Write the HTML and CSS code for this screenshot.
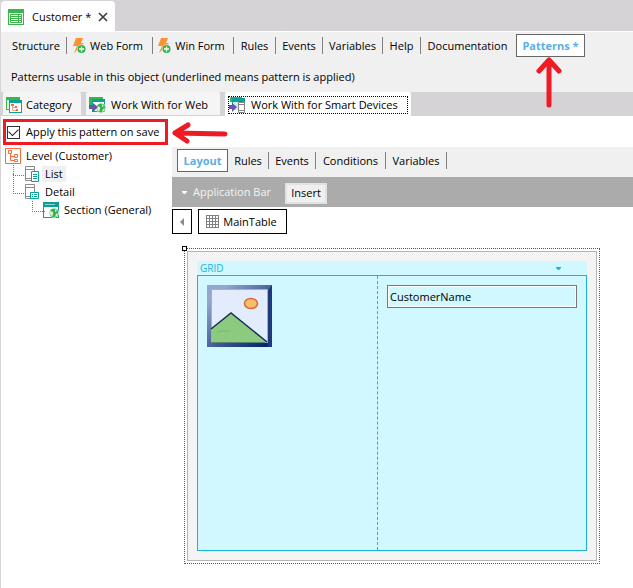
FILE: index.html
```html
<!DOCTYPE html>
<html lang="en">
<head>
<meta charset="utf-8">
<title>Customer</title>
<link rel="stylesheet" href="styles.css">
</head>
<body>
<svg class="defs" width="0" height="0" aria-hidden="true">
  <symbol id="bolt" viewBox="0 0 13 16">
    <path d="M3 0h7L8 5h3L1 15l3-7H0z" fill="#fb9333"/>
    <circle cx="8.500" cy="11" r="4.500" fill="#f0f0f0"/>
    <circle cx="8.500" cy="11" r="4" fill="#2fb84a"/>
    <path d="M8.500 8.500v5M6 11h5" stroke="#fff" stroke-width="1.300"/>
  </symbol>
  <symbol id="globe" viewBox="0 0 10 10">
    <circle cx="5" cy="5" r="5" fill="#fff"/>
    <circle cx="5" cy="5" r="4.500" fill="#35b44a"/>
    <path d="M1 3l3 1 0 2-1 3L1 6zM6 1l2 2-2 1zM7 6l2-1-1 3-2 1z" fill="#d8f3dc"/>
  </symbol>
</svg>

<header class="doc-tabs">
  <div class="doc-tab">
    <svg width="16" height="16" viewBox="0 0 16 16"><path d="M0 0h16v16H0z" fill="#3ab54a"/><path d="M1 4h14v11H1z" fill="#fff"/><path d="M2.500 5.500h11v8h-11z" fill="none" stroke="#3ab54a"/><path d="M3 7.500h7M3 9.500h7M3 11.500h7M11 7.500h2M11 9.500h2M11 11.500h2M10.500 5v9" stroke="#3ab54a"/></svg>
    <span>Customer *</span>
    <button class="close" aria-label="Close"><svg width="10" height="10" viewBox="0 0 10 10"><path d="M1 1l8 8M9 1L1 9" stroke="#404040" stroke-width="1.700"/></svg></button>
  </div>
</header>

<main>
  <section class="top">
    <nav class="menu parts">
      <a href="#">Structure</a>
      <a href="#" class="with-icon"><svg width="13" height="16"><use href="#bolt"/></svg>Web Form</a>
      <a href="#" class="with-icon"><svg width="13" height="16"><use href="#bolt"/></svg>Win Form</a>
      <a href="#">Rules</a>
      <a href="#">Events</a>
      <a href="#">Variables</a>
      <a href="#">Help</a>
      <a href="#" class="last">Documentation</a>
      <a href="#" class="current">Patterns *
        <svg class="arrow-up" width="26" height="54" viewBox="0 0 26 54"><path d="M13 49V4M3 15L13 4l10 11" fill="none" stroke="#ee1b24" stroke-width="5" stroke-linecap="round" stroke-linejoin="round"/></svg>
      </a>
    </nav>
    <p class="hint">Patterns usable in this object (underlined means pattern is applied)</p>
  </section>

  <nav class="pattern-tabs">
    <button class="category"><svg width="16" height="16" viewBox="0 0 16 16"><path d="M0 0h14v13H0z" fill="#3ab54a"/><path d="M1 3h3v9H1z" fill="#dff3e2"/><path d="M3 3h13v13H3z" fill="#0aa396"/><path d="M4 6h11v9H4z" fill="#fff"/><path d="M6.500 8v5.500H11M6.500 10.500H10" fill="none" stroke="#f7a184"/><path d="M5 7h3v2H5zM9 9h2v2H9zM10 12h2v2h-2z" fill="#f26b3a"/></svg>Category</button>
    <button class="web"><svg width="17" height="16" viewBox="0 0 17 16"><path d="M0 0h14v9H0z" fill="#3ab54a"/><path d="M3 2h13v13H3z" fill="#0a9f97"/><path d="M4 5h11v9H4z" fill="#fff"/><svg x="7" y="6" width="10" height="10"><use href="#globe"/></svg><path d="M0 8h4V6l5 4-5 5v-3H0z" fill="#6657a7"/></svg>Work With for Web</button>
    <button class="smart"><span class="focus"><svg width="16" height="16" viewBox="0 0 16 16"><path d="M1 0h12v5H1z" fill="#3ab54a"/><path d="M3 1h13v12H3z" fill="#0a9f97"/><path d="M4 5h11v8H4z" fill="#c9ecea"/><path d="M9.500 5.500h6v10h-6z" fill="#fff" stroke="#858585"/><path d="M9 7.500h7M9 13.500h7" stroke="#858585"/><path d="M0 8h3V6l5 4-5 5v-3H0z" fill="#6657a7"/></svg>Work With for Smart Devices</span></button>
  </nav>

  <div class="work">
    <aside class="side">
      <div class="apply">
        <label><input type="checkbox" checked>Apply this pattern on save</label>
        <svg class="arrow-left" width="58" height="22" viewBox="0 0 58 22"><path d="M54 12L4 11M17 3L4 11l12 8" fill="none" stroke="#ee1b24" stroke-width="5" stroke-linecap="round" stroke-linejoin="round"/></svg>
      </div>
      <ul class="tree">
        <li>
          <div class="node"><svg width="16" height="16" viewBox="0 0 16 16"><path d="M.500 .500h15v15H.500z" fill="#fff" stroke="#fb6a3a"/><path d="M5.500 5v7.500H9M5.500 8.500H9" fill="none" stroke="#fb6a3a"/><path d="M3.500 2.500h3v3h-3zM9.500 6.500h3v3h-3zM9.500 11.500h3v2h-3z" fill="#fff" stroke="#fb6a3a"/></svg><span>Level (Customer)</span></div>
          <ul>
            <li><div class="node"><svg width="16" height="16" viewBox="0 0 16 16"><path d="M1.500 .500h9v14h-9zM1 3.500h10M1 12.500h7" fill="#fff" stroke="#8b8b8b"/><path d="M7.500 5.500h7v10h-7z" fill="#fff" stroke="#0a9f97"/><path d="M9 8.500h4M9 10.500h4M9 12.500h4" stroke="#0a9f97"/></svg><span class="selected">List</span></div></li>
            <li><div class="node"><svg width="16" height="16" viewBox="0 0 16 16"><path d="M1.500 .500h9v14h-9zM1 3.500h10M1 12.500h7" fill="#fff" stroke="#8b8b8b"/><path d="M6.500 8.500h8v6h-8z" fill="#fff" stroke="#0a9f97"/><path d="M8 10.500h1M10 10.500h3M8 12.500h1M10 12.500h3" stroke="#0a9f97"/></svg><span>Detail</span></div>
              <ul>
                <li><div class="node"><svg width="16" height="16" viewBox="0 0 16 16"><path d="M0 0h16v16H0z" fill="#0a9f97"/><path d="M1 5h14v10H1z" fill="#fff"/><path d="M2 2.500h10" stroke="#8fd5d0"/><svg x="6" y="6" width="10" height="10"><use href="#globe"/></svg></svg><span>Section (General)</span></div></li>
              </ul>
            </li>
          </ul>
        </li>
      </ul>
    </aside>

    <section class="editor">
      <nav class="menu views">
        <a href="#" class="current">Layout</a>
        <a href="#">Rules</a>
        <a href="#">Events</a>
        <a href="#">Conditions</a>
        <a href="#">Variables</a>
      </nav>
      <div class="appbar">
        <svg width="5" height="3" viewBox="0 0 5 3"><path d="M0 0h5v1L3 3H2L0 1z" fill="#fff"/></svg>
        <span>Application Bar</span>
        <button>Insert</button>
      </div>
      <div class="crumbs">
        <button class="back" aria-label="Back"><svg width="5" height="8" viewBox="0 0 5 8"><path d="M4 0v8L0 4z" fill="#8a8a8a"/></svg></button>
        <button class="table-btn"><svg width="13" height="13" viewBox="0 0 13 13"><path d="M.500 0v13M3.500 0v13M6.500 0v13M9.500 0v13M12.500 0v13M0 .500h13M0 3.500h13M0 6.500h13M0 9.500h13M0 12.500h13" stroke="#808080"/></svg>MainTable</button>
      </div>
      <div class="selection">
        <i class="handle"></i>
        <div class="surface">
          <div class="grid-head"><span>GRID</span><svg width="5" height="3" viewBox="0 0 5 3"><path d="M0 0h5v1L3 3H2L0 1z" fill="#19b5d8"/></svg></div>
          <div class="grid-body">
            <div class="cell">
              <svg width="65" height="62" viewBox="0 0 65 62">
                <defs>
                  <linearGradient id="frame" x1="0" y1="0" x2="1" y2="1"><stop offset="0.150" stop-color="#94a8cd"/><stop offset="0.550" stop-color="#415b95"/><stop offset="1" stop-color="#001d68"/></linearGradient>
                </defs>
                <path d="M0 0h65v62H0z" fill="url(#frame)"/>
                <path d="M61 5l4-5v62H61z" fill="#1d3b7b"/>
                <path d="M4 4h57v54H4z" fill="#a0b0d2"/>
                <path d="M5 5h55v52H5z" fill="#e2ecfc"/>
                <path d="M4 44l20-16 36 29H4z" fill="#8ccb7f"/>
                <path d="M4 44l20-16 36 29" fill="none" stroke="#142e57" stroke-width="1.500"/>
                <path d="M4 57.500h54" stroke="#568575"/>
                <path d="M10 47l5-1M15 46h8" stroke="#7dbb70"/>
                <ellipse cx="44" cy="18.500" rx="6.500" ry="5" fill="#fcbd6b" stroke="#d8693a" stroke-width="1.500"/>
              </svg>
            </div>
            <div class="cell"><input type="text" aria-label="CustomerName" value="CustomerName"></div>
          </div>
        </div>
      </div>
    </section>
  </div>
</main>
</body>
</html>
```
FILE: styles.css
```css
* { box-sizing: border-box; }

body {
  margin: 0;
  min-height: 100vh;
  display: flex;
  flex-direction: column;
  background: #d5d3d6;
  color: #000;
  font: 11px/16px "Open Sans", "Noto Sans", sans-serif;
}

button, input { font: inherit; color: inherit; }
button { padding: 0; border: 0; background: none; }
a { color: inherit; text-decoration: none; }
svg { display: block; flex: none; }
.defs { position: absolute; }

.doc-tabs { height: 31px; padding: 1px 0 0 1px; }
.doc-tab {
  display: flex;
  align-items: center;
  width: 114px;
  height: 30px;
  padding: 2px 7px 0;
  border-radius: 4px 4px 0 0;
  background: #fff;
}
.doc-tab span { flex: 1; padding-left: 8px; white-space: nowrap; }

main {
  flex: 1;
  display: flex;
  flex-direction: column;
  margin-left: 1px;
  background: #fff;
}

.top { height: 61px; padding: 2px 5px 0; border-top: 1px solid #fff; background: #f0f0f0; }
.hint { margin: 12px 0 0 5px; }

.menu { display: grid; align-items: center; }
.parts { grid-template-columns: 61px 86px 81px 42px 47px 60px 38px 95px 69px; }
.menu a {
  position: relative;
  display: flex;
  align-items: center;
  justify-content: center;
  gap: 4px;
  height: 17px;
  border-right: 1px solid #808080;
  white-space: nowrap;
}
.menu a.with-icon { padding-right: 3px; }
.menu a.last { padding-right: 2px; border-right: 0; }
.menu a.current {
  height: 23px;
  border: 1px solid #666;
  background: #fff;
  color: #5aafe6;
  font-weight: 700;
}
.arrow-up { position: absolute; left: 19px; top: 21px; }

.pattern-tabs { display: flex; gap: 5px; height: 24px; padding-left: 2px; background: #d5d3d6; }
.pattern-tabs button {
  display: flex;
  align-items: center;
  gap: 5px;
  height: 23px;
  padding: 2px 3px 0;
  border-radius: 2px 2px 0 0;
  background: #f5f5f5;
  white-space: nowrap;
}
.pattern-tabs .category { width: 78px; gap: 4px; }
.pattern-tabs .web { width: 134px; }
.pattern-tabs .smart { width: 186px; height: 24px; background: #fff; }
.focus {
  display: flex;
  align-items: center;
  gap: 6px;
  width: 180px;
  height: 18px;
  border: 1px dotted #000;
}

.work { flex: 1; display: flex; }
.side { flex: none; width: 171px; }
.apply {
  position: relative;
  width: 165px;
  height: 26px;
  margin: 3px 0 0 2px;
  border: 3px solid #ee1b24;
}
.apply label { display: flex; align-items: center; gap: 6px; height: 20px; white-space: nowrap; }
.apply input {
  appearance: none;
  width: 13px;
  height: 13px;
  margin: 0 0 0 1px;
  border: 1px solid #333;
  background: #fff;
  display: grid;
  place-items: center;
}
.apply input:checked::before {
  content: "";
  width: 8px;
  height: 5px;
  border: solid #222;
  border-width: 0 0 1px 1px;
  transform: translateY(-1px) rotate(-45deg);
}
.arrow-left { position: absolute; left: 165px; top: 0; }

.tree, .tree ul { margin: 0; padding: 0; list-style: none; }
.tree { padding: 2px 0 0 4px; }
.tree ul { padding-left: 19px; }
.tree li { position: relative; }
.tree ul > li::before {
  content: "";
  position: absolute;
  left: -11px;
  top: 0;
  width: 12px;
  height: 10px;
  border: dotted #777;
  border-width: 0 0 1px 1px;
}
.tree ul > li + li::before { top: -9px; height: 19px; }
.node { display: flex; align-items: center; gap: 2px; height: 18px; }
.node span { padding: 0 3px; white-space: nowrap; }
.node .selected { background: #f0f0f0; }

.editor { flex: 1; min-width: 0; padding-top: 31px; }
.views { grid-template-columns: 51px 41px 47px 70px 61px; height: 30px; padding-left: 5px; padding-bottom: 3px; background: #f0f0f0; }
.appbar { display: flex; align-items: center; height: 30px; padding: 0 10px; background: #ababab; color: #f4f4f4; }
.appbar span { width: 98px; padding-left: 6px; }
.appbar button {
  width: 42px;
  height: 21px;
  margin-top: 2px;
  border: 2px solid #e2e2e2;
  background: #f0f0f0;
  color: #000;
}
.crumbs { display: flex; gap: 6px; padding-top: 2px; }
.crumbs button { display: flex; align-items: center; justify-content: center; gap: 4px; height: 25px; border: 1px solid #000; background: #fff; }
.crumbs .back { width: 20px; }
.crumbs .table-btn { width: 89px; padding-right: 2px; }

.selection { position: relative; margin: 14px 33px 0 12px; padding: 2px; border: 1px dotted #555; }
.handle { position: absolute; left: -3px; top: -3px; width: 5px; height: 5px; border: 1px solid #000; background: #fff; }
.surface { padding: 9px; border: 1px solid #b4b4b4; background: #f4f4f4; }
.grid-head {
  display: flex;
  align-items: center;
  justify-content: space-between;
  height: 14px;
  padding: 0 26px 0 3px;
  background: #d1f7ff;
  color: #19b5d8;
  font-size: 10px;
}
.grid-body {
  display: grid;
  grid-template-columns: 179px 1fr;
  min-height: 276px;
  border: 1px solid #19b5d8;
  background: #d1f7ff;
}
.cell { padding: 9px; }
.cell + .cell { border-left: 1px dashed #19b5d8; }
.cell input {
  display: block;
  width: 100%;
  height: 23px;
  padding: 0 2px;
  border: 1px solid #777;
  outline: 1px solid #fff;
  outline-offset: -2px;
  background: #d1f7ff;
}
```
